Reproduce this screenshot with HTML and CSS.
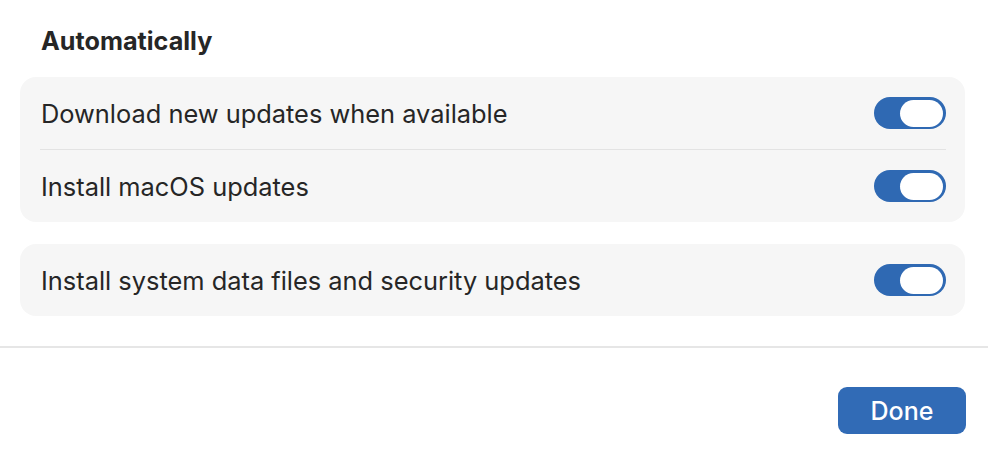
FILE: index.html
```html
<!DOCTYPE html>
<html>
<head>
    <title>Automatic Updates</title>
    <link rel="stylesheet" href="styles.css">
</head>
<body>
    <div class="sheet">
        <div class="content">
            <h2 class="section-title">Automatically</h2>
            <div class="group">
                <div class="row">
                    <span class="label">Download new updates when available</span>
                    <span class="toggle on"><span class="knob"></span></span>
                </div>
                <div class="divider"></div>
                <div class="row">
                    <span class="label">Install macOS updates</span>
                    <span class="toggle on"><span class="knob"></span></span>
                </div>
            </div>
            <div class="group">
                <div class="row">
                    <span class="label">Install system data files and security updates</span>
                    <span class="toggle on"><span class="knob"></span></span>
                </div>
            </div>
        </div>
        <div class="footer">
            <button class="done-button">Done</button>
        </div>
    </div>
</body>
</html>
```

FILE: styles.css
```css
body {
    margin: 0;
    background-color: #fff;
    font-family: Inter, "Noto Sans", sans-serif;
    color: #262626;
}
.sheet {
    width: 988px;
}
.content {
    padding: 26px 23px 30px 20px;
}
.section-title {
    margin: 0 0 21px 21px;
    font-size: 25.2px;
    font-weight: 700;
    line-height: 30px;
}
.group {
    background-color: #f6f6f6;
    border-radius: 16px;
    margin-bottom: 22px;
}
.group:last-child {
    margin-bottom: 0;
}
.row {
    display: flex;
    align-items: center;
    justify-content: space-between;
    height: 72px;
    padding: 0 19px 0 21px;
}
.label {
    font-size: 25.4px;
}
.divider {
    height: 1px;
    margin: 0 19px 0 20px;
    background-color: #e3e3e3;
}
.toggle {
    display: flex;
    align-items: center;
    justify-content: flex-end;
    box-sizing: border-box;
    width: 72px;
    height: 32px;
    padding: 0 3px;
    border-radius: 16px;
    background-color: #2f69b3;
}
.knob {
    width: 43px;
    height: 27px;
    border-radius: 14px;
    background-color: #fff;
}
.footer {
    display: flex;
    justify-content: flex-end;
    border-top: 2px solid #e6e6e6;
    padding: 39px 22px 19px 0;
}
.done-button {
    width: 128px;
    height: 47px;
    border: none;
    border-radius: 9px;
    background-color: #316bb6;
    color: #fff;
    font-family: Inter, "Noto Sans", sans-serif;
    font-size: 25px;
    font-weight: 500;
}
```
